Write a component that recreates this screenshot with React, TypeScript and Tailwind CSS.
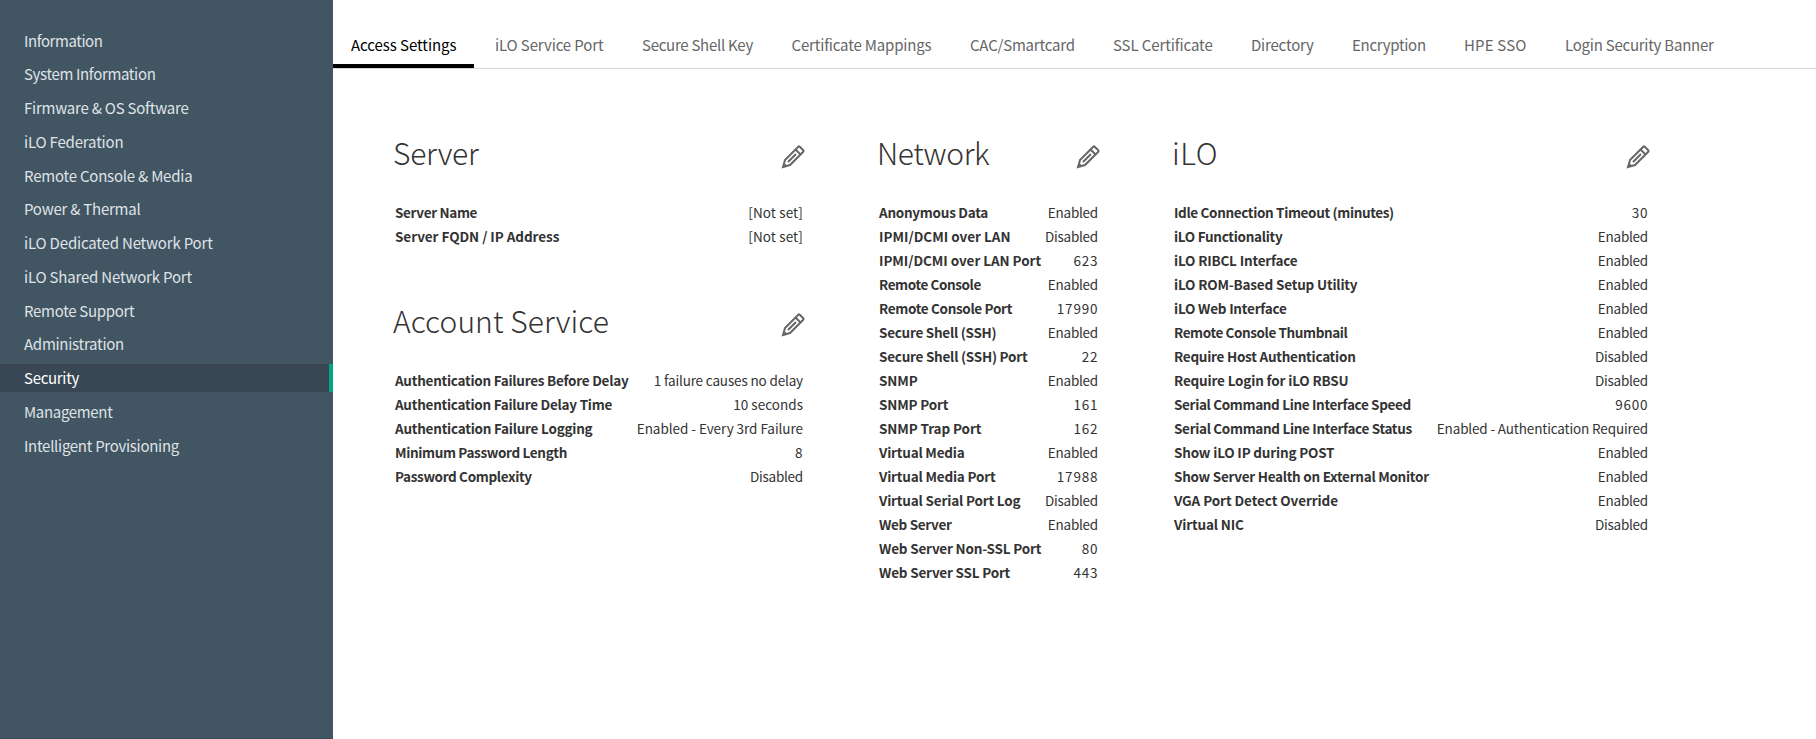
import clsx from "clsx";

type Item = { text: string; fit: string; active?: boolean };
type Row = { label: string; fit: string; value: string };

const NAV: Item[] = [
  { text: "Information", fit: "tracking-[-0.44px]" },
  { text: "System Information", fit: "tracking-[-0.35px]" },
  { text: "Firmware & OS Software", fit: "tracking-[-0.23px]" },
  { text: "iLO Federation", fit: "tracking-[-0.18px]" },
  { text: "Remote Console & Media", fit: "tracking-[-0.22px]" },
  { text: "Power & Thermal", fit: "tracking-[-0.23px]" },
  { text: "iLO Dedicated Network Port", fit: "tracking-[-0.18px]" },
  { text: "iLO Shared Network Port", fit: "tracking-[-0.19px]" },
  { text: "Remote Support", fit: "tracking-[-0.3px]" },
  { text: "Administration", fit: "tracking-[-0.27px]" },
  { text: "Security", fit: "tracking-[-0.3px]", active: true },
  { text: "Management", fit: "tracking-[-0.33px]" },
  { text: "Intelligent Provisioning", fit: "tracking-[-0.29px]" },
];

const TABS: Item[] = [
  { text: "Access Settings", fit: "w-[144px] tracking-[-0.05px]", active: true },
  { text: "iLO Service Port", fit: "w-[147px] tracking-[-0.12px]" },
  { text: "Secure Shell Key", fit: "w-[149.5px] tracking-[-0.27px]" },
  { text: "Certificate Mappings", fit: "w-[178.5px] tracking-[-0.17px]" },
  { text: "CAC/Smartcard", fit: "w-[143px] tracking-[-0.2px]" },
  { text: "SSL Certificate", fit: "w-[138px] tracking-[-0.1px]" },
  { text: "Directory", fit: "w-[101px] tracking-[-0.2px]" },
  { text: "Encryption", fit: "w-[112px] tracking-[-0.3px]" },
  { text: "HPE SSO", fit: "w-[101px] tracking-[0.18px]" },
  { text: "Login Security Banner", fit: "w-[190px] tracking-[-0.24px]" },
];

const SERVER: Row[] = [
  { label: "Server Name", fit: "tracking-[-0.33px]", value: "[Not set]" },
  { label: "Server FQDN / IP Address", fit: "tracking-[-0.05px]", value: "[Not set]" },
];

const ACCOUNT: Row[] = [
  { label: "Authentication Failures Before Delay", fit: "tracking-[-0.25px]", value: "1 failure causes no delay" },
  { label: "Authentication Failure Delay Time", fit: "tracking-[-0.25px]", value: "10 seconds" },
  { label: "Authentication Failure Logging", fit: "tracking-[-0.23px]", value: "Enabled - Every 3rd Failure" },
  { label: "Minimum Password Length", fit: "tracking-[-0.34px]", value: "8" },
  { label: "Password Complexity", fit: "tracking-[-0.35px]", value: "Disabled" },
];

const NETWORK: Row[] = [
  { label: "Anonymous Data", fit: "tracking-[-0.26px]", value: "Enabled" },
  { label: "IPMI/DCMI over LAN", fit: "tracking-[0px]", value: "Disabled" },
  { label: "IPMI/DCMI over LAN Port", fit: "tracking-[-0.05px]", value: "623" },
  { label: "Remote Console", fit: "tracking-[-0.4px]", value: "Enabled" },
  { label: "Remote Console Port", fit: "tracking-[-0.33px]", value: "17990" },
  { label: "Secure Shell (SSH)", fit: "tracking-[-0.26px]", value: "Enabled" },
  { label: "Secure Shell (SSH) Port", fit: "tracking-[-0.24px]", value: "22" },
  { label: "SNMP", fit: "tracking-[-0.1px]", value: "Enabled" },
  { label: "SNMP Port", fit: "tracking-[-0.18px]", value: "161" },
  { label: "SNMP Trap Port", fit: "tracking-[-0.11px]", value: "162" },
  { label: "Virtual Media", fit: "tracking-[-0.2px]", value: "Enabled" },
  { label: "Virtual Media Port", fit: "tracking-[-0.19px]", value: "17988" },
  { label: "Virtual Serial Port Log", fit: "tracking-[-0.17px]", value: "Disabled" },
  { label: "Web Server", fit: "tracking-[-0.32px]", value: "Enabled" },
  { label: "Web Server Non-SSL Port", fit: "tracking-[-0.2px]", value: "80" },
  { label: "Web Server SSL Port", fit: "tracking-[-0.2px]", value: "443" },
];

const ILO: Row[] = [
  { label: "Idle Connection Timeout (minutes)", fit: "tracking-[-0.35px]", value: "30" },
  { label: "iLO Functionality", fit: "tracking-[-0.29px]", value: "Enabled" },
  { label: "iLO RIBCL Interface", fit: "tracking-[-0.18px]", value: "Enabled" },
  { label: "iLO ROM-Based Setup Utility", fit: "tracking-[-0.18px]", value: "Enabled" },
  { label: "iLO Web Interface", fit: "tracking-[-0.21px]", value: "Enabled" },
  { label: "Remote Console Thumbnail", fit: "tracking-[-0.4px]", value: "Enabled" },
  { label: "Require Host Authentication", fit: "tracking-[-0.24px]", value: "Disabled" },
  { label: "Require Login for iLO RBSU", fit: "tracking-[-0.16px]", value: "Disabled" },
  { label: "Serial Command Line Interface Speed", fit: "tracking-[-0.34px]", value: "9600" },
  { label: "Serial Command Line Interface Status", fit: "tracking-[-0.32px]", value: "Enabled - Authentication Required" },
  { label: "Show iLO IP during POST", fit: "tracking-[-0.18px]", value: "Enabled" },
  { label: "Show Server Health on External Monitor", fit: "tracking-[-0.27px]", value: "Enabled" },
  { label: "VGA Port Detect Override", fit: "tracking-[-0.08px]", value: "Enabled" },
  { label: "Virtual NIC", fit: "tracking-[-0.15px]", value: "Disabled" },
];

const isNumber = (v: string) => /^\d+$/.test(v);

function valueFit(v: string) {
  if (isNumber(v)) return "tracking-[0.8px] -mr-[0.3px]";
  if (v.startsWith("[")) return "tracking-[0.12px]";
  if (v === "Enabled" || v === "Disabled") return "tracking-[-0.24px]";
  if (v === "10 seconds") return "tracking-[0.03px]";
  if (v.includes("Every")) return "tracking-[-0.04px]";
  return "tracking-[-0.15px]";
}

function EditIcon() {
  return (
    <svg viewBox="0 0 24 24" className="h-6 w-6" fill="none" stroke="#666" strokeWidth="2">
      <path d="M14,4 L20,10 M22.294,5.294 C22.684,5.684 22.681,6.319 22.286,6.714 L9,20 L2,22 L4,15 L17.286,1.714 C17.681,1.319 18.313,1.313 18.706,1.706 L22.294,5.294 Z M3,19 L5,21 M7,17 L15,9" />
    </svg>
  );
}

function Section({ title, fit, rows }: { title: string; fit: string; rows: Row[] }) {
  return (
    <section>
      <header className="flex h-12 items-center justify-between">
        <h2 className={clsx("pl-px text-[30px] leading-[48px] font-light whitespace-nowrap", fit)}>{title}</h2>
        <button type="button" aria-label={`Edit ${title}`} className="mt-[9px]">
          <EditIcon />
        </button>
      </header>
      <dl className="mt-6 pr-[2px] pl-[3px]">
        {rows.map((r) => (
          <div key={r.label} className="flex h-6 justify-between text-[13.5px] leading-6 whitespace-nowrap">
            <dt className={clsx("font-bold", r.fit)}>{r.label}</dt>
            <dd className={valueFit(r.value)}>{r.value}</dd>
          </div>
        ))}
      </dl>
    </section>
  );
}

export default function App() {
  return (
    <div className="flex h-[739px] w-[1816px] overflow-hidden bg-white font-['Noto_Sans_CJK_SC',sans-serif] text-[#333]">
      <nav className="flex w-[333px] shrink-0 flex-col gap-[5.75px] border-b border-[#3c4d5a] bg-[#425563] pt-[26.5px]">
        {NAV.map((n) => (
          <a
            key={n.text}
            className={clsx(
              "block h-7 shrink-0 pl-6 text-[15px] leading-7 whitespace-nowrap",
              n.fit,
              n.active ? "border-r-4 border-[#01a982] bg-[#394754] text-white" : "text-[#dfe3e6]",
            )}
          >
            {n.text}
          </a>
        ))}
      </nav>
      <main className="min-w-0 flex-1">
        <div className="flex h-[69px] border-b border-[#d9d9d9]">
          {TABS.map((t) => (
            <div
              key={t.text}
              className={clsx("h-[68px] shrink-0 whitespace-nowrap", t.fit, t.active ? "text-black" : "text-[#666]")}
            >
              <div
                className={clsx(
                  "h-[68px] pt-[27px] pl-[18px] text-[15px] leading-[35px]",
                  t.active && "w-[141px] border-b-4 border-black",
                )}
              >
                {t.text}
              </div>
            </div>
          ))}
        </div>
        <div className="flex gap-[71px] pt-[59px] pl-[59px]">
          <div className="flex w-[413px] shrink-0 flex-col gap-12">
            <Section title="Server" fit="tracking-[-0.25px]" rows={SERVER} />
            <Section title="Account Service" fit="tracking-[0.06px]" rows={ACCOUNT} />
          </div>
          <div className="w-[224px] shrink-0">
            <Section title="Network" fit="tracking-[-0.35px]" rows={NETWORK} />
          </div>
          <div className="w-[479px] shrink-0">
            <Section title="iLO" fit="tracking-[0.6px]" rows={ILO} />
          </div>
        </div>
      </main>
    </div>
  );
}
